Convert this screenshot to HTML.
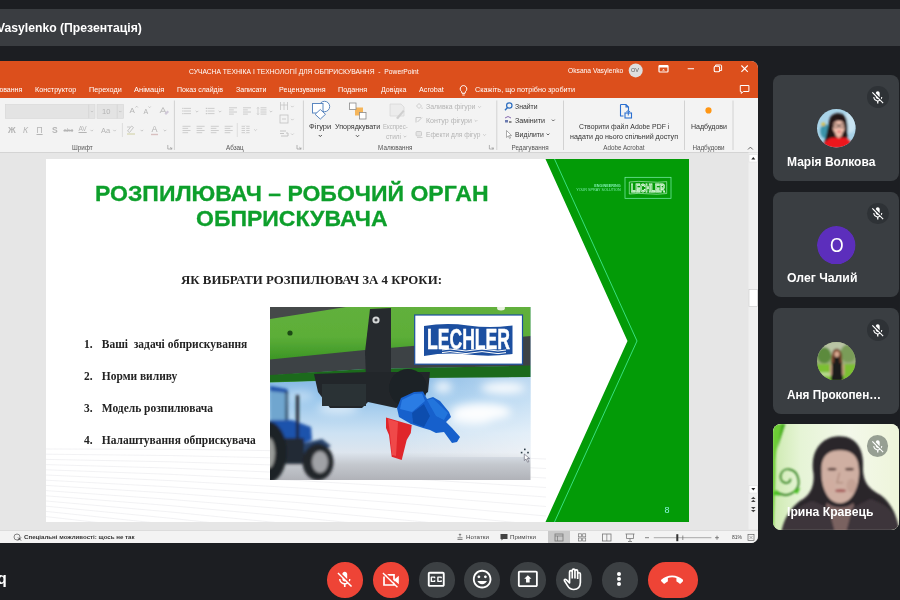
<!DOCTYPE html>
<html lang="uk">
<head>
<meta charset="utf-8">
<title>Meet</title>
<style>
*{box-sizing:border-box;margin:0;padding:0}
html,body{width:900px;height:600px;overflow:hidden;background:#1c1e22;font-family:"Liberation Sans",sans-serif}
.abs{position:absolute}
body>div{will-change:transform}
.t{position:absolute;white-space:pre;transform-origin:0 50%}
#hdr{left:0;top:9px;width:900px;height:37px;background:#3a3d41}
#ppt{left:0;top:61px;width:758px;height:482px;background:#e6e6e6;border-radius:0 7px 7px 0;overflow:hidden}
#orange{left:0;top:0;width:758px;height:37px;background:#dc4f1c}
#ribbon{left:0;top:37px;width:758px;height:54.500px;background:#f3f3f3;border-bottom:1px solid #d4d4d4}
#slide{left:46px;top:98px;width:643px;height:363px;background:#fff;overflow:hidden}
#status{left:0;top:469px;width:758px;height:13px;background:#f3f3f3;border-top:1px solid #dcdcdc}
.tile{position:absolute;border-radius:8px;overflow:hidden}
.mic{position:absolute;width:22px;height:22px;border-radius:50%}
.av{position:absolute;left:45px;top:34px;width:38px;height:38px;border-radius:50%;overflow:hidden}
.btn{position:absolute;background:#3c4043}
.btn.red{background:#ee4436}
.t1{-webkit-text-stroke:.3px #0d9f2b;color:#0d9f2b;font-weight:bold;font-size:22px;white-space:nowrap;line-height:26px;transform:scaleX(1.046);transform-origin:0 0}
#t1a{left:49px;top:22px}
#t1b{left:150px;top:47px}
#h2{left:135px;top:113px;font-family:"Liberation Serif",serif;font-weight:bold;font-size:12.300px;color:#222;white-space:nowrap;line-height:16px;transform:scaleX(1.045);transform-origin:0 0}
.li{left:38px;font-family:"Liberation Serif",serif;font-weight:bold;font-size:12.500px;color:#222;white-space:nowrap;line-height:16px;transform:scaleX(0.917);transform-origin:0 0}
.li b{position:absolute;left:0;top:0}
.li span{position:absolute;left:19.400px;top:0}
#pgn{left:618.500px;top:346px;font-size:9px;line-height:10px;color:#8af8e0;}
</style>
</head>
<body>
<div id="hdr" class="abs"><div class="t" style="left:-3.0px;top:9.5px;font-size:13.5px;line-height:18px;color:#fff;font-weight:bold;transform:scaleX(0.903);">Vasylenko (Презентація)</div>
</div>

<div id="ppt" class="abs">
  <div id="orange" class="abs"></div>
  <div id="ribbon" class="abs"></div>
  <div id="slide" class="abs">
    <svg class="abs" style="left:0;top:0" width="643" height="363" viewBox="0 0 643 363">
      <path d="M0,290.0 Q250,289.0 500,300.0" fill="none" stroke="#ececef" stroke-width=".7"/>
<path d="M0,295.2 Q250,296.4 500,309.5" fill="none" stroke="#ececef" stroke-width=".7"/>
<path d="M0,300.4 Q250,303.7 500,319.0" fill="none" stroke="#ececef" stroke-width=".7"/>
<path d="M0,305.6 Q250,311.1 500,328.5" fill="none" stroke="#ececef" stroke-width=".7"/>
<path d="M0,310.8 Q250,318.4 500,338.0" fill="none" stroke="#ececef" stroke-width=".7"/>
<path d="M0,316.0 Q250,325.8 500,347.5" fill="none" stroke="#ececef" stroke-width=".7"/>
<path d="M0,321.2 Q250,333.1 500,357.0" fill="none" stroke="#ececef" stroke-width=".7"/>
<path d="M0,326.4 Q250,340.4 500,366.5" fill="none" stroke="#ececef" stroke-width=".7"/>
<path d="M0,331.6 Q250,347.8 500,376.0" fill="none" stroke="#ececef" stroke-width=".7"/>
<path d="M0,336.8 Q250,355.1 500,385.5" fill="none" stroke="#ececef" stroke-width=".7"/>
<path d="M0,342.0 Q250,362.5 500,395.0" fill="none" stroke="#ececef" stroke-width=".7"/>
<path d="M0,347.2 Q250,369.9 500,404.5" fill="none" stroke="#ececef" stroke-width=".7"/>
<path d="M0,352.4 Q250,377.2 500,414.0" fill="none" stroke="#ececef" stroke-width=".7"/>
<path d="M0,357.6 Q250,384.6 500,423.5" fill="none" stroke="#ececef" stroke-width=".7"/>
<polygon points="499.500,0 643,0 643,363 499.500,363 581.500,182" fill="#039b07"/>
      <polyline points="508.500,0 591,182 508.500,363" fill="none" stroke="#3ee68c" stroke-width="0.9"/>
<g>
<rect x="579" y="18.300" width="46" height="21" fill="none" stroke="#7ff0b4" stroke-width=".7"/>
<path d="M583.300,23 Q592,21.800 602,22.800 T620.700,22.600 V34.500 Q611,35.800 602,34.800 T583.300,35 Z" fill="none" stroke="#c8f8d8" stroke-width=".6"/>
<text x="585" y="32.600" font-family="Liberation Sans, sans-serif" font-weight="bold" font-size="11" fill="#0a9a14" stroke="#eaffea" stroke-width=".9" textLength="34" lengthAdjust="spacingAndGlyphs">LECHLER</text>
<text x="574.700" y="27.500" text-anchor="end" font-family="Liberation Sans, sans-serif" font-weight="bold" font-size="3.300" fill="#7ff0b4" textLength="26.500" lengthAdjust="spacingAndGlyphs">ENGINEERING</text>
<text x="574.700" y="32.300" text-anchor="end" font-family="Liberation Sans, sans-serif" font-size="3.300" fill="#7ff0b4" textLength="44.500" lengthAdjust="spacingAndGlyphs">YOUR SPRAY SOLUTION</text>
</g>

    </svg>
    <div class="abs t1" id="t1a">РОЗПИЛЮВАЧ – РОБОЧИЙ ОРГАН</div>
    <div class="abs t1" id="t1b">ОБПРИСКУВАЧА</div>
    <div class="abs" id="h2">ЯК ВИБРАТИ РОЗПИЛЮВАЧ ЗА 4 КРОКИ:</div>
    <div class="abs li" style="top:177px"><b>1.</b><span>Ваші&nbsp; задачі обприскування</span></div>
    <div class="abs li" style="top:209.400px"><b>2.</b><span>Норми виливу</span></div>
    <div class="abs li" style="top:240.600px"><b>3.</b><span>Модель розпилювача</span></div>
    <div class="abs li" style="top:272.800px"><b>4.</b><span>Налаштування обприскувача</span></div>
    <svg class="abs" id="photo" style="left:224px;top:147.5px" width="260.5" height="173" viewBox="270 307 260.5 173" preserveAspectRatio="none">
      <defs>
        <linearGradient id="sky" x1="0" y1="0" x2="0" y2="1"><stop offset="0.4" stop-color="#84b7e4"/><stop offset=".54" stop-color="#9ac7ec"/><stop offset=".73" stop-color="#cde2f3"/><stop offset=".84" stop-color="#dde5ee"/><stop offset=".91" stop-color="#c4c8ce"/><stop offset="1" stop-color="#b0b2b8"/></linearGradient>
        <linearGradient id="hz" x1="0" y1="0" x2="1" y2="0"><stop offset="0" stop-color="#fff" stop-opacity="0"/><stop offset="1" stop-color="#fff" stop-opacity=".45"/></linearGradient>
        <linearGradient id="gbar" x1="0" y1="0" x2="0" y2="1"><stop offset="0" stop-color="#62b03c"/><stop offset=".55" stop-color="#5cae38"/><stop offset="1" stop-color="#3a9424"/></linearGradient>
        <filter id="bl" x="-5%" y="-5%" width="110%" height="110%"><feGaussianBlur stdDeviation="0.7"/></filter>
        <filter id="bl2" x="-20%" y="-20%" width="140%" height="140%"><feGaussianBlur stdDeviation="4"/></filter>
        <filter id="bl3" x="-20%" y="-20%" width="140%" height="140%"><feGaussianBlur stdDeviation="1.4"/></filter>
        <clipPath id="pc"><rect x="270" y="307" width="260.5" height="173"/></clipPath>
      </defs>
      <g clip-path="url(#pc)">
      <rect x="270" y="307" width="261" height="173" fill="url(#sky)"/>
      <rect x="400" y="377" width="131" height="80" fill="url(#hz)"/>
      <g filter="url(#bl2)" fill="#fff">
        <ellipse cx="481" cy="412" rx="30" ry="9" opacity=".95"/>
        <ellipse cx="470" cy="420" rx="22" ry="6" opacity=".7"/>
        <ellipse cx="503" cy="388" rx="22" ry="6" opacity=".9"/>
        <ellipse cx="443" cy="387" rx="9" ry="6" opacity=".8"/>
        <ellipse cx="338" cy="408" rx="20" ry="6" opacity=".55"/>
        <ellipse cx="300" cy="396" rx="14" ry="5" opacity=".4"/>
      </g>
      <!-- tractor -->
      <g filter="url(#bl3)">
        <polygon points="270,390 286,392 289,422 270,424" fill="#6fa6cf"/>
        <polygon points="270,386 287,389 288,393 270,391" fill="#1a50a8"/>
        <rect x="285.500" y="391" width="2" height="32" fill="#1c2a3c"/>
        <polygon points="270,420 292,420 311,427 312,440 296,446 270,446" fill="#1b52ac"/>
        <rect x="296" y="395" width="3" height="54" fill="#1a222c"/>
        <polygon points="300,444 322,439 331,446 318,452 300,462" fill="#26426c"/>
        <rect x="282" y="438" width="22" height="26" fill="#222a34"/>
        <ellipse cx="267" cy="452" rx="20" ry="31" fill="#1e2226"/>
        <ellipse cx="269" cy="453" rx="6" ry="15" fill="#9a9c9a"/>
        <ellipse cx="318" cy="462" rx="15.500" ry="18.500" fill="#22262c"/>
        <ellipse cx="320" cy="462" rx="8" ry="11" fill="#a0a2a6"/>
      </g>
      <!-- green boom -->
      <g filter="url(#bl)">
        <polygon points="270,307 531,307 531,337 365,351 270,361" fill="url(#gbar)"/>
        <polygon points="270,307 346,307 270,319" fill="#44484a"/>
        <polygon points="270,375.500 316,372.500 316,381 270,382.500" fill="#3a9a2a"/>
        <polygon points="270,359.500 365,350 531,336 531,366 365,369 270,375.500" fill="#3e4245"/>
        <polygon points="270,375 365,369 531,365.500 531,377 420,378 270,382" fill="#1d6a1c"/>
        <circle cx="290" cy="333" r="2.6" fill="#1e4a14"/>
        <ellipse cx="501" cy="308" rx="4" ry="2.5" fill="#e8f0e0"/>
        <!-- bracket -->
        <polygon points="370,309 391,308 391,378 366,378 365,352" fill="#262a2e"/>
        <polygon points="367,377 392,377 391,383 368,383" fill="#9a9ea2"/>
        <circle cx="376" cy="320" r="3.6" fill="#d6d8d8"/>
        <circle cx="376" cy="320" r="1.6" fill="#3a3e42"/>
        <!-- nozzle body -->
        <polygon points="314,374 368,372 430,372 428,392 410,404 396,408 368,402 362,408 330,408 318,392" fill="#22262a"/>
        <circle cx="408" cy="388" r="19" fill="#1e2226"/>
        <rect x="322" y="384" width="44" height="22" fill="#2c3034"/>
        <!-- blue nozzle -->
        <polygon points="401,398 414,392 423,391.500 427,399 433,397 440,401 449,412 451,417 446,422 452,428 460,437 457,442 452,443 444,432 436,433 430,430 423,428 411,424 399,417 397,408" fill="#1660cc"/>
        <polygon points="402,400 414,394 422,393.500 425,401 412,412 400,409" fill="#2c7ce4"/>
        <polygon points="427,400 433,398.500 448,413 444,420 436,416" fill="#2474dc"/>
        <polygon points="412,413 424,404 430,416 424,427 413,423" fill="#0f4eae"/>
        <!-- red nozzle -->
        <polygon points="386,417.500 411.700,425 410.800,433 406.700,440 401.700,460 391.700,456.700 389,435 386,428" fill="#e0262c"/>
        <polygon points="388,419 398,422 396,456 392,455 390,434" fill="#f0484a"/>
      </g>
      <!-- LECHLER logo -->
      <rect x="414.700" y="315" width="107.800" height="49.200" fill="#fff" stroke="#1b4f9e" stroke-width="1.200"/>
      <path d="M424,326 Q446,322.500 468,325.500 T512.500,325.500 L512.500,354 Q490,357 468,354.500 T424,356 Z" fill="#1c4fa0"/>
      <text x="427" y="348.500" font-family="Liberation Sans, sans-serif" font-weight="bold" font-size="29" fill="#fff" textLength="83" lengthAdjust="spacingAndGlyphs" stroke="#fff" stroke-width=".5">LECHLER</text>
      <path d="M442,350 q8,-2 16,0 t16,0 t16,0 t16,0" fill="none" stroke="#fff" stroke-width="1"/>
      <path d="M442,352.600 q8,-2 16,0 t16,0 t16,0 t16,0" fill="none" stroke="#fff" stroke-width="1"/>
      </g>
    </svg>
    <svg class="abs" style="left:471px;top:286px" width="16" height="20" viewBox="517 445 16 20">
      <g fill="#2a3a44"><rect x="524" y="448.600" width="1.600" height="1.600"/><rect x="520.800" y="451.800" width="1.600" height="1.600"/><rect x="527.200" y="451.800" width="1.600" height="1.600"/></g>
      <path d="M524.300,454 v6.500 l1.700,-1.500 l1.600,3.200 l1.200,-.6 l-1.600,-3.100 h2.300z" fill="#fff" stroke="#556" stroke-width=".6"/>
    </svg>
    <div class="abs" id="pgn">8</div>
  </div>

  <div id="status" class="abs"></div>
<svg class="abs" style="left:0;top:0" width="758" height="482" viewBox="0 61 758 482">
<circle cx="635.700" cy="70.400" r="7" fill="#dedede"/>
<rect x="659" y="65.500" width="9" height="6.500" rx=".8" fill="none" stroke="#fff" stroke-width="1.200"/><rect x="659" y="65.500" width="9" height="2" fill="#fff"/><path d="M662,70.500 l1.500,-1.500 l1.500,1.500z" fill="#fff"/>
<line x1="687.700" y1="68.700" x2="694" y2="68.700" stroke="#fff" stroke-width="1.100"/>
<rect x="714.200" y="66.300" width="5.400" height="5.400" rx="1.300" fill="none" stroke="#fff" stroke-width="1.100"/><path d="M715.600,66 v-1 h5 a1,1 0 0 1 1,1 v4.500 h-1.500" fill="none" stroke="#fff" stroke-width="1"/>
<path d="M741.400,65.500 l6.400,6.400 M747.800,65.500 l-6.400,6.400" stroke="#fff" stroke-width="1.100" fill="none"/>
<path d="M740.300,85.500 h8.600 v6 h-5.600 l-2,2 v-2 h-1z" fill="none" stroke="#fff" stroke-width="1"/>
<path d="M461.500,91.500 a3.300,3.300 0 1 1 4,0 l-.5,1.800 h-3z" fill="none" stroke="#fff" stroke-width="1"/><line x1="462.300" y1="95" x2="464.700" y2="95" stroke="#fff" stroke-width=".9"/>
<line x1="174.4" y1="100.500" x2="174.4" y2="150" stroke="#d2d2d2" stroke-width="1"/>
<line x1="303.4" y1="100.500" x2="303.4" y2="150" stroke="#d2d2d2" stroke-width="1"/>
<line x1="496.8" y1="100.500" x2="496.8" y2="150" stroke="#d2d2d2" stroke-width="1"/>
<line x1="563.5" y1="100.500" x2="563.5" y2="150" stroke="#d2d2d2" stroke-width="1"/>
<line x1="684.5" y1="100.500" x2="684.5" y2="150" stroke="#d2d2d2" stroke-width="1"/>
<line x1="733" y1="100.500" x2="733" y2="150" stroke="#d2d2d2" stroke-width="1"/>
<rect x="5.300" y="104.500" width="89.700" height="13.800" fill="#e3e3e3" stroke="#d6d6d6" stroke-width=".6"/>
<line x1="88.700" y1="104.500" x2="88.700" y2="118.300" stroke="#d0d0d0" stroke-width=".6"/>
<rect x="97" y="104.500" width="26.500" height="13.800" fill="#e3e3e3" stroke="#d6d6d6" stroke-width=".6"/>
<line x1="117.200" y1="104.500" x2="117.200" y2="118.300" stroke="#d0d0d0" stroke-width=".6"/>
<path d="M90.8,110.9 L92,112.1 L93.2,110.9" fill="none" stroke="#c4c4c4" stroke-width="0.9"/>
<path d="M119.1,110.9 L120.3,112.1 L121.5,110.9" fill="none" stroke="#c4c4c4" stroke-width="0.9"/>
<path d="M135.500,107.500 l1.200,-1.300 l1.200,1.300" fill="none" stroke="#bdbdbd" stroke-width=".8"/>
<path d="M148.500,106.500 l1.100,1.200 l1.100,-1.200" fill="none" stroke="#bdbdbd" stroke-width=".8"/>
<path d="M160,113 l3,-5.500 l3,5.500 M161,111.300 h4" fill="none" stroke="#c0c0c0" stroke-width="1"/><path d="M164.500,113.500 l3,-3 l1.500,1.500 l-3,3z" fill="#d0c8d8"/>
<path d="M90.5,129.85 L91.8,131.15 L93.1,129.85" fill="none" stroke="#c4c4c4" stroke-width="0.9"/>
<path d="M113.3,129.85 L114.6,131.15 L115.89999999999999,129.85" fill="none" stroke="#c4c4c4" stroke-width="0.9"/>
<path d="M140.6,129.85 L141.9,131.15 L143.20000000000002,129.85" fill="none" stroke="#c4c4c4" stroke-width="0.9"/>
<path d="M163.7,129.85 L165,131.15 L166.3,129.85" fill="none" stroke="#c4c4c4" stroke-width="0.9"/>
<line x1="122.400" y1="123" x2="122.400" y2="137" stroke="#d6d6d6" stroke-width=".8"/>
<path d="M127.500,131 l4,-5 l2,1.500 l-4,5z" fill="none" stroke="#c0c0c0" stroke-width=".9"/><path d="M127,127 h3" stroke="#c0c0c0" stroke-width=".8"/><line x1="127" y1="134" x2="135" y2="134" stroke="#d8d8b8" stroke-width="1.400"/>
<line x1="151" y1="134.500" x2="158" y2="134.500" stroke="#d8c0c0" stroke-width="1.400"/>
<path d="M168,145.2 h-0.010 M167.8,145 v4 h4.400" fill="none" stroke="#9a9a9a" stroke-width=".7"/><path d="M170,147 l1.800,1.800 M171.8,147.4 v1.400 h-1.400" fill="none" stroke="#9a9a9a" stroke-width=".6"/>
<path d="M297.2,145.2 h-0.010 M297.0,145 v4 h4.400" fill="none" stroke="#9a9a9a" stroke-width=".7"/><path d="M299.2,147 l1.800,1.800 M301.0,147.4 v1.400 h-1.400" fill="none" stroke="#9a9a9a" stroke-width=".6"/>
<path d="M489.6,145.2 h-0.010 M489.40000000000003,145 v4 h4.400" fill="none" stroke="#9a9a9a" stroke-width=".7"/><path d="M491.6,147 l1.800,1.800 M493.40000000000003,147.4 v1.400 h-1.400" fill="none" stroke="#9a9a9a" stroke-width=".6"/>
<line x1="184.0" y1="108.4" x2="191.0" y2="108.4" stroke="#c8c8c8" stroke-width="0.9"/>
<line x1="184.0" y1="111.0" x2="191.0" y2="111.0" stroke="#c8c8c8" stroke-width="0.9"/>
<line x1="184.0" y1="113.6" x2="191.0" y2="113.6" stroke="#c8c8c8" stroke-width="0.9"/>
<rect x="182.3" y="107.8" width="1.200" height="1.200" fill="#c8c8c8"/>
<rect x="182.3" y="110.4" width="1.200" height="1.200" fill="#c8c8c8"/>
<rect x="182.3" y="113.0" width="1.200" height="1.200" fill="#c8c8c8"/>
<line x1="207.5" y1="108.4" x2="214.5" y2="108.4" stroke="#c8c8c8" stroke-width="0.9"/>
<line x1="207.5" y1="111.0" x2="214.5" y2="111.0" stroke="#c8c8c8" stroke-width="0.9"/>
<line x1="207.5" y1="113.6" x2="214.5" y2="113.6" stroke="#c8c8c8" stroke-width="0.9"/>
<rect x="205.8" y="107.8" width="1.200" height="1.200" fill="#c8c8c8"/>
<rect x="205.8" y="110.4" width="1.200" height="1.200" fill="#c8c8c8"/>
<rect x="205.8" y="113.0" width="1.200" height="1.200" fill="#c8c8c8"/>
<path d="M195.7,110.85 L197,112.15 L198.3,110.85" fill="none" stroke="#c8c8c8" stroke-width="0.9"/>
<path d="M218.7,110.85 L220,112.15 L221.3,110.85" fill="none" stroke="#c8c8c8" stroke-width="0.9"/>
<path d="M269.7,110.85 L271,112.15 L272.3,110.85" fill="none" stroke="#c8c8c8" stroke-width="0.9"/>
<line x1="229.0" y1="107.8" x2="237.0" y2="107.8" stroke="#c8c8c8" stroke-width="0.9"/>
<line x1="229.0" y1="109.9" x2="233.8" y2="109.9" stroke="#c8c8c8" stroke-width="0.9"/>
<line x1="229.0" y1="112.0" x2="237.0" y2="112.0" stroke="#c8c8c8" stroke-width="0.9"/>
<line x1="229.0" y1="114.1" x2="233.8" y2="114.1" stroke="#c8c8c8" stroke-width="0.9"/>
<line x1="243.0" y1="107.8" x2="251.0" y2="107.8" stroke="#c8c8c8" stroke-width="0.9"/>
<line x1="243.0" y1="109.9" x2="247.8" y2="109.9" stroke="#c8c8c8" stroke-width="0.9"/>
<line x1="243.0" y1="112.0" x2="251.0" y2="112.0" stroke="#c8c8c8" stroke-width="0.9"/>
<line x1="243.0" y1="114.1" x2="247.8" y2="114.1" stroke="#c8c8c8" stroke-width="0.9"/>
<line x1="260.5" y1="107.8" x2="266.5" y2="107.8" stroke="#c8c8c8" stroke-width="0.9"/>
<line x1="260.5" y1="109.9" x2="266.5" y2="109.9" stroke="#c8c8c8" stroke-width="0.9"/>
<line x1="260.5" y1="112.0" x2="266.5" y2="112.0" stroke="#c8c8c8" stroke-width="0.9"/>
<line x1="260.5" y1="114.1" x2="266.5" y2="114.1" stroke="#c8c8c8" stroke-width="0.9"/>
<path d="M258,107.500 v7 M257,108.500 l1,-1.200 l1,1.200 M257,113.500 l1,1.200 l1,-1.200" fill="none" stroke="#c4c4c4" stroke-width=".7"/>
<path d="M291.09999999999997,105.85 L292.4,107.15 L293.7,105.85" fill="none" stroke="#c8c8c8" stroke-width="0.9"/>
<path d="M291.09999999999997,118.85 L292.4,120.15 L293.7,118.85" fill="none" stroke="#c8c8c8" stroke-width="0.9"/>
<path d="M291.09999999999997,133.54999999999998 L292.4,134.85 L293.7,133.54999999999998" fill="none" stroke="#c8c8c8" stroke-width="0.9"/>
<path d="M280.500,102 v8 M284,102 v8 M287.500,102 v8 M280.500,105 h7" fill="none" stroke="#c4c4c4" stroke-width=".8"/>
<rect x="280" y="115" width="8" height="8" fill="none" stroke="#c0c0c0" stroke-width=".8"/><path d="M282,119 h4" stroke="#c0c0c0" stroke-width=".8"/>
<path d="M280,131 h6 M280,133.500 h4 M281,136 h7 v-3 h-2" fill="none" stroke="#c0c0c0" stroke-width=".9"/>
<line x1="182.5" y1="126.3" x2="190.5" y2="126.3" stroke="#c8c8c8" stroke-width="0.9"/>
<line x1="182.5" y1="128.4" x2="188.1" y2="128.4" stroke="#c8c8c8" stroke-width="0.9"/>
<line x1="182.5" y1="130.5" x2="190.5" y2="130.5" stroke="#c8c8c8" stroke-width="0.9"/>
<line x1="182.5" y1="132.7" x2="188.1" y2="132.7" stroke="#c8c8c8" stroke-width="0.9"/>
<line x1="196.6" y1="126.3" x2="204.6" y2="126.3" stroke="#c8c8c8" stroke-width="0.9"/>
<line x1="196.6" y1="128.4" x2="202.2" y2="128.4" stroke="#c8c8c8" stroke-width="0.9"/>
<line x1="196.6" y1="130.5" x2="204.6" y2="130.5" stroke="#c8c8c8" stroke-width="0.9"/>
<line x1="196.6" y1="132.7" x2="202.2" y2="132.7" stroke="#c8c8c8" stroke-width="0.9"/>
<line x1="210.8" y1="126.3" x2="218.8" y2="126.3" stroke="#c8c8c8" stroke-width="0.9"/>
<line x1="210.8" y1="128.4" x2="216.4" y2="128.4" stroke="#c8c8c8" stroke-width="0.9"/>
<line x1="210.8" y1="130.5" x2="218.8" y2="130.5" stroke="#c8c8c8" stroke-width="0.9"/>
<line x1="210.8" y1="132.7" x2="216.4" y2="132.7" stroke="#c8c8c8" stroke-width="0.9"/>
<line x1="224.7" y1="126.3" x2="232.7" y2="126.3" stroke="#c8c8c8" stroke-width="0.9"/>
<line x1="224.7" y1="128.4" x2="230.29999999999998" y2="128.4" stroke="#c8c8c8" stroke-width="0.9"/>
<line x1="224.7" y1="130.5" x2="232.7" y2="130.5" stroke="#c8c8c8" stroke-width="0.9"/>
<line x1="224.7" y1="132.7" x2="230.29999999999998" y2="132.7" stroke="#c8c8c8" stroke-width="0.9"/>
<line x1="237.300" y1="123" x2="237.300" y2="137" stroke="#d8d8d8" stroke-width=".8"/>
<line x1="241.6" y1="126.3" x2="249.6" y2="126.3" stroke="#c8c8c8" stroke-width="0.9"/>
<line x1="241.6" y1="128.4" x2="249.6" y2="128.4" stroke="#c8c8c8" stroke-width="0.9"/>
<line x1="241.6" y1="130.5" x2="249.6" y2="130.5" stroke="#c8c8c8" stroke-width="0.9"/>
<line x1="241.6" y1="132.7" x2="249.6" y2="132.7" stroke="#c8c8c8" stroke-width="0.9"/>
<line x1="245.600" y1="126" x2="245.600" y2="133" stroke="#f3f3f3" stroke-width="1.200"/>
<path d="M254.2,129.35 L255.5,130.65 L256.8,129.35" fill="none" stroke="#c8c8c8" stroke-width="0.9"/>
<g fill="#fff" stroke="#5b87c0" stroke-width="1"><circle cx="324.500" cy="106.500" r="5.200"/><rect x="312.500" y="103.500" width="10.500" height="9.500"/><path d="M320.300,109.500 l5.200,4.800 l-5.200,4.800 l-5.200,-4.800z"/></g>
<path d="M318.8,135.05 L320.3,136.55 L321.8,135.05" fill="none" stroke="#444" stroke-width="1"/>
<rect x="355" y="107.500" width="8" height="8" fill="#f5b55a"/><rect x="349.500" y="103" width="6.500" height="6.500" fill="#fff" stroke="#8a8a8a" stroke-width=".8"/><rect x="359.500" y="112.500" width="6.500" height="6.500" fill="#fff" stroke="#8a8a8a" stroke-width=".8"/>
<path d="M356.0,135.25 L357.5,136.75 L359.0,135.25" fill="none" stroke="#444" stroke-width="1"/>
<path d="M390,104 h11 l3,3 v9 h-14z" fill="#ececec" stroke="#d8d8d8" stroke-width=".8"/><path d="M396,118 l7,-8 l1.500,1.300 l-6.500,8z" fill="#cfcfcf"/>
<path d="M403.7,135.85 L405,137.15 L406.3,135.85" fill="none" stroke="#c4c4c4" stroke-width="0.9"/>
<path d="M416.500,106 l2.500,-2.500 l2.500,2.500 l-2.500,2.500z M422,107.500 v1.500" fill="none" stroke="#c8c8c8" stroke-width=".9"/>
<path d="M416,122.500 v-5 h5 M417.500,122 l4.500,-4.500" fill="none" stroke="#c4c4c4" stroke-width=".9"/>
<rect x="416" y="131.500" width="5.500" height="4.500" rx="1" fill="#e4e4e4" stroke="#c4c4c4" stroke-width=".8"/><path d="M417,137.500 h5.500" stroke="#cfcfcf" stroke-width=".9"/>
<path d="M478.2,106.35 L479.5,107.65 L480.8,106.35" fill="none" stroke="#c4c4c4" stroke-width="0.9"/>
<path d="M474.7,120.14999999999999 L476,121.45 L477.3,120.14999999999999" fill="none" stroke="#c4c4c4" stroke-width="0.9"/>
<path d="M483.2,134.35 L484.5,135.65 L485.8,134.35" fill="none" stroke="#c4c4c4" stroke-width="0.9"/>
<circle cx="509.300" cy="105.500" r="2.700" fill="none" stroke="#2f6fc0" stroke-width="1.200"/><line x1="507.300" y1="107.700" x2="505" y2="110.300" stroke="#2f6fc0" stroke-width="1.300"/>
<path d="M505,118 q3,-3 6,0" fill="none" stroke="#7a5aa8" stroke-width=".9"/><rect x="505" y="120" width="3" height="2.500" fill="#6a7ab0"/><rect x="509" y="121" width="2.500" height="2" fill="#8a8a8a"/>
<path d="M506.500,130.500 v7 l1.800,-1.600 l1.300,2.600 l1,-.5 l-1.300,-2.500 h2.300z" fill="#fff" stroke="#8a8a8a" stroke-width=".7"/>
<path d="M551.9,119.6 L553.3,121.0 L554.6999999999999,119.6" fill="none" stroke="#555" stroke-width="0.9"/>
<path d="M546.6,133.60000000000002 L548,135.0 L549.4,133.60000000000002" fill="none" stroke="#555" stroke-width="0.9"/>
<path d="M620.500,104.500 h5.500 l2.500,2.500 v3 M626,104.500 v2.500 h2.500 M623.500,116 h-3 v-11.500" fill="none" stroke="#2a6fd0" stroke-width="1.100"/><rect x="625" y="113" width="6.500" height="5" fill="none" stroke="#2a6fd0" stroke-width="1.100"/><path d="M628.300,115.500 v-5 M626.500,112 l1.800,-1.800 l1.800,1.800" fill="none" stroke="#2a6fd0" stroke-width="1"/>
<circle cx="708.500" cy="110.400" r="3.100" fill="#ff9614"/>
<path d="M748,149.500 l2.400,-2.400 l2.400,2.400" fill="none" stroke="#555" stroke-width=".9"/>
<rect x="748.500" y="152.500" width="9.500" height="377" fill="#f0f0f0"/>
<rect x="749" y="154.500" width="8.500" height="7.500" fill="#fff" stroke="#dadada" stroke-width=".5"/><path d="M751.300,159.500 l2,-2.500 l2,2.500z" fill="#222"/>
<rect x="749" y="289.500" width="8.500" height="17" fill="#fff" stroke="#c8c8c8" stroke-width=".6"/>
<rect x="749" y="485.500" width="8.500" height="7.500" fill="#fff" stroke="#dadada" stroke-width=".5"/><path d="M751.300,488 l2,2.500 l2,-2.500z" fill="#222"/>
<path d="M751,499 l2.300,-2.300 l2.300,2.300z M751,502 l2.300,-2.300 l2.300,2.300z" fill="#444"/>
<path d="M751,507 l2.300,2.300 l2.300,-2.300z M751,510 l2.300,2.300 l2.300,-2.300z" fill="#444"/>
<circle cx="17" cy="537" r="3" fill="none" stroke="#555" stroke-width=".7"/><path d="M18,537.500 l3,3 M21,537.500 l-3,3" stroke="#333" stroke-width=".8"/>
<path d="M457.500,539.500 h5 M457.500,537.800 h5 M460,534 v2.500 M458.800,535 l1.200,-1.200 l1.200,1.200" fill="none" stroke="#555" stroke-width=".7"/>
<path d="M500.500,534 h7 v5 h-4.500 l-1.500,1.500 v-1.500 h-1z" fill="#444"/>
<rect x="548" y="531" width="22" height="12" fill="#c9c9c9"/>
<rect x="555" y="534" width="8" height="7" fill="none" stroke="#777" stroke-width=".8"/><path d="M555,536 h8 M557.500,536 v5" stroke="#777" stroke-width=".7"/>
<rect x="578.5" y="533.8" width="3" height="3" fill="none" stroke="#777" stroke-width=".7"/>
<rect x="578.5" y="538.0" width="3" height="3" fill="none" stroke="#777" stroke-width=".7"/>
<rect x="582.7" y="533.8" width="3" height="3" fill="none" stroke="#777" stroke-width=".7"/>
<rect x="582.7" y="538.0" width="3" height="3" fill="none" stroke="#777" stroke-width=".7"/>
<rect x="602.500" y="534" width="8.500" height="7" fill="none" stroke="#777" stroke-width=".8"/><path d="M606.800,534 v7" stroke="#777" stroke-width=".7"/>
<path d="M625.500,534 h9 M626.500,534 v4.500 h7 v-4.500 M630,538.500 v2.500 M628,541.500 h4" fill="none" stroke="#777" stroke-width=".8"/>
<path d="M645,537.700 h4" stroke="#666" stroke-width=".8"/><line x1="653.800" y1="537.700" x2="711.400" y2="537.700" stroke="#888" stroke-width=".7"/><rect x="676.300" y="534.200" width="2" height="7" fill="#333"/><line x1="682.800" y1="535.500" x2="682.800" y2="540" stroke="#666" stroke-width=".7"/><path d="M715,537.700 h4 M717,535.700 v4" stroke="#666" stroke-width=".8"/>
<rect x="748" y="534.500" width="6" height="6" fill="none" stroke="#666" stroke-width=".7"/><path d="M749.500,536 l3,3 M752.500,536 l-3,3" stroke="#666" stroke-width=".5"/>
</svg>

<div class="t" style="left:188.6px;top:4.5px;font-size:7.2px;line-height:11px;color:#fff;transform:scaleX(0.936);">СУЧАСНА ТЕХНІКА І ТЕХНОЛОГІЇ ДЛЯ ОБПРИСКУВАННЯ  -  PowerPoint</div>
<div class="t" style="left:568.0px;top:4.0px;font-size:7.2px;line-height:11px;color:#fff;transform:scaleX(0.931);">Oksana Vasylenko</div>
<div class="t" style="left:-16.5px;top:23.0px;font-size:7.8px;line-height:11px;color:#fff;transform:scaleX(0.898);">Малювання</div>
<div class="t" style="left:34.8px;top:23.0px;font-size:7.8px;line-height:11px;color:#fff;transform:scaleX(0.926);">Конструктор</div>
<div class="t" style="left:88.7px;top:23.0px;font-size:7.8px;line-height:11px;color:#fff;transform:scaleX(0.925);">Переходи</div>
<div class="t" style="left:134.0px;top:23.0px;font-size:7.8px;line-height:11px;color:#fff;transform:scaleX(0.963);">Анімація</div>
<div class="t" style="left:176.8px;top:23.0px;font-size:7.8px;line-height:11px;color:#fff;transform:scaleX(0.900);">Показ слайдів</div>
<div class="t" style="left:235.9px;top:23.0px;font-size:7.8px;line-height:11px;color:#fff;transform:scaleX(0.910);">Записати</div>
<div class="t" style="left:279.0px;top:23.0px;font-size:7.8px;line-height:11px;color:#fff;transform:scaleX(0.916);">Рецензування</div>
<div class="t" style="left:338.2px;top:23.0px;font-size:7.8px;line-height:11px;color:#fff;transform:scaleX(0.927);">Подання</div>
<div class="t" style="left:380.7px;top:23.0px;font-size:7.8px;line-height:11px;color:#fff;transform:scaleX(0.902);">Довідка</div>
<div class="t" style="left:419.2px;top:23.0px;font-size:7.8px;line-height:11px;color:#fff;transform:scaleX(0.923);">Acrobat</div>
<div class="t" style="left:475.0px;top:23.0px;font-size:7.8px;line-height:11px;color:#fff;transform:scaleX(0.929);">Скажіть, що потрібно зробити</div>
<div class="t" style="left:71.9px;top:82.3px;font-size:6.3px;line-height:10px;color:#555;">Шрифт</div>
<div class="t" style="left:226.0px;top:82.3px;font-size:6.3px;line-height:10px;color:#555;">Абзац</div>
<div class="t" style="left:378.1px;top:82.3px;font-size:6.3px;line-height:10px;color:#555;">Малювання</div>
<div class="t" style="left:511.5px;top:82.3px;font-size:6.3px;line-height:10px;color:#555;">Редагування</div>
<div class="t" style="left:603.3px;top:82.3px;font-size:6.3px;line-height:10px;color:#555;">Adobe Acrobat</div>
<div class="t" style="left:692.4px;top:82.3px;font-size:6.3px;line-height:10px;color:#555;">Надбудови</div>
<div class="t" style="left:102.0px;top:44.8px;font-size:7.5px;line-height:11px;color:#b4b4b4;">10</div>
<div class="t" style="left:309.3px;top:60.2px;font-size:7.6px;line-height:11px;color:#333;transform:scaleX(0.990);">Фігури</div>
<div class="t" style="left:334.7px;top:60.2px;font-size:7.6px;line-height:11px;color:#333;transform:scaleX(0.935);">Упорядкувати</div>
<div class="t" style="left:383.3px;top:60.2px;font-size:7.6px;line-height:11px;color:#b4b4b4;transform:scaleX(0.792);">Експрес-</div>
<div class="t" style="left:386.0px;top:69.7px;font-size:7.6px;line-height:11px;color:#b4b4b4;transform:scaleX(0.850);">стилі</div>
<div class="t" style="left:426.0px;top:40.2px;font-size:7.6px;line-height:11px;color:#b4b4b4;transform:scaleX(0.912);">Заливка фігури</div>
<div class="t" style="left:426.0px;top:53.9px;font-size:7.6px;line-height:11px;color:#b4b4b4;transform:scaleX(0.932);">Контур фігури</div>
<div class="t" style="left:426.0px;top:68.0px;font-size:7.6px;line-height:11px;color:#b4b4b4;transform:scaleX(0.871);">Ефекти для фігур</div>
<div class="t" style="left:515.0px;top:40.2px;font-size:7.6px;line-height:11px;color:#333;transform:scaleX(0.900);">Знайти</div>
<div class="t" style="left:515.0px;top:53.5px;font-size:7.6px;line-height:11px;color:#333;transform:scaleX(0.940);">Замінити</div>
<div class="t" style="left:515.0px;top:67.5px;font-size:7.6px;line-height:11px;color:#333;transform:scaleX(0.904);">Виділити</div>
<div class="t" style="left:578.7px;top:59.8px;font-size:7.6px;line-height:11px;color:#333;transform:scaleX(0.905);">Створити файл Adobe PDF і</div>
<div class="t" style="left:569.8px;top:69.7px;font-size:7.6px;line-height:11px;color:#333;transform:scaleX(0.935);">надати до нього спільний доступ</div>
<div class="t" style="left:691.0px;top:60.2px;font-size:7.6px;line-height:11px;color:#333;transform:scaleX(0.927);">Надбудови</div>
<div class="t" style="left:8.0px;top:63.0px;font-size:8.5px;line-height:12px;color:#b4b4b4;font-weight:bold;">Ж</div>
<div class="t" style="left:23.0px;top:63.0px;font-size:8.5px;line-height:12px;color:#b4b4b4;font-style:italic;">К</div>
<div class="t" style="left:36.5px;top:63.0px;font-size:8.5px;line-height:12px;color:#b4b4b4;text-decoration:underline;">П</div>
<div class="t" style="left:52.0px;top:63.0px;font-size:8.5px;line-height:12px;color:#b4b4b4;font-weight:bold;">S</div>
<div class="t" style="left:63.5px;top:64.5px;font-size:6px;line-height:9px;color:#b4b4b4;text-decoration:line-through;">abc</div>
<div class="t" style="left:78.5px;top:63.0px;font-size:6.5px;line-height:10px;color:#b4b4b4;text-decoration:underline;">AV</div>
<div class="t" style="left:101.0px;top:63.5px;font-size:7.5px;line-height:11px;color:#b4b4b4;">Aa</div>
<div class="t" style="left:151.5px;top:62.0px;font-size:9px;line-height:13px;color:#b4b4b4;">A</div>
<div class="t" style="left:129.5px;top:44.3px;font-size:8px;line-height:12px;color:#b4b4b4;">A</div>
<div class="t" style="left:143.5px;top:45.8px;font-size:7px;line-height:10px;color:#b4b4b4;">A</div>
<div class="t" style="left:631.0px;top:5.0px;font-size:5.5px;line-height:9px;color:#555;">OV</div>
<div class="t" style="left:24.4px;top:472.1px;font-size:5.6px;line-height:9px;color:#333;font-weight:bold;transform:scaleX(1.096);">Спеціальні можливості: щось не так</div>
<div class="t" style="left:466.0px;top:472.2px;font-size:5.6px;line-height:9px;color:#444;transform:scaleX(1.113);">Нотатки</div>
<div class="t" style="left:510.0px;top:472.2px;font-size:5.6px;line-height:9px;color:#444;transform:scaleX(1.106);">Примітки</div>
<div class="t" style="left:732.0px;top:472.2px;font-size:5.6px;line-height:9px;color:#444;transform:scaleX(0.892);">81%</div>

</div>

<div class="tile" style="left:772.5px;top:75px;width:126px;height:106px;background:#3a3e42"><div class="mic" style="left:94.3px;top:11.3px;width:21.400px;height:21.400px;background:#2e3236"></div><svg class="abs" style="left:97.25px;top:14.75px" width="15.5" height="15.5" viewBox="0 0 24 24"><path d="M19 11h-1.700c0 .74-.16 1.430-.43 2.050l1.230 1.230c.56-.98.9-2.090.9-3.280zm-4.020.17c0-.06.020-.11.020-.17V5c0-1.660-1.340-3-3-3S9 3.340 9 5v.18l5.980 5.990zM4.270 3L3 4.270l6.010 6.010V11c0 1.660 1.330 3 2.990 3 .22 0 .44-.03.65-.08l1.660 1.660c-.71.33-1.500.52-2.310.52-2.760 0-5.300-2.100-5.300-5.100H5c0 3.410 2.720 6.230 6 6.720V21h2v-3.280c.91-.13 1.770-.45 2.540-.9L19.730 21 21 19.730 4.270 3z" fill="#fff" /></svg><svg class="abs" style="left:44.2px;top:34.1px" width="38.600" height="38.600" viewBox="-19.300 -19.300 38.600 38.600"><defs><clipPath id="c534"><circle r="19.300"/></clipPath><filter id="ab" x="-20%" y="-20%" width="140%" height="140%"><feGaussianBlur stdDeviation=".8"/></filter></defs><g clip-path="url(#c534)"><rect x="-20" y="-20" width="40" height="40" fill="#a9d3e8"/><g filter="url(#ab)"><ellipse cx="-11" cy="3" rx="5" ry="7" fill="#3a94aa"/><ellipse cx="-13" cy="-4" rx="2" ry="2" fill="#d8c050"/><ellipse cx="14" cy="-6" rx="6" ry="11" fill="#c8e4f2"/>
<path d="M-13,17 C-9,6 -8,-4 -6.500,-10 C-4,-16 6,-17 9.500,-11 C12,-5 11,4 11,10 L10,17z" fill="#231214"/><ellipse cx="2.500" cy="-1.500" rx="6" ry="7.800" fill="#f2c0ae"/><path d="M-4.500,-3 Q-2,-10.500 5,-9.500 Q9,-8 9,-2 Q7,-8 2,-7.500 Q-2,-7 -4.500,-3z" fill="#231214"/>
<rect x="-2.700" y="-4" width="4.600" height="3.200" rx=".8" fill="none" stroke="#1a1a1a" stroke-width=".9"/><rect x="3.400" y="-4" width="4.600" height="3.200" rx=".8" fill="none" stroke="#1a1a1a" stroke-width=".9"/>
<path d="M-14,20 C-12,11 -5,8.500 2,9.500 C10,8.500 15,11 16.500,20z" fill="#ee141e"/><path d="M-1,7 l3.500,3 l3.500,-3 v-2 h-7z" fill="#f0baa8"/><ellipse cx="2.800" cy="3.300" rx="2" ry=".8" fill="#d83c50"/></g></g></svg><div class="t" style="left:14.1px;top:77.7px;font-size:13px;line-height:18px;color:#fff;font-weight:bold;transform:scaleX(0.925);">Марія Волкова</div>
</div>
<div class="tile" style="left:772.5px;top:192px;width:126px;height:105px;background:#3a3e42"><div class="mic" style="left:94.3px;top:10.8px;width:21.400px;height:21.400px;background:#2e3236"></div><svg class="abs" style="left:97.25px;top:14.25px" width="15.5" height="15.5" viewBox="0 0 24 24"><path d="M19 11h-1.700c0 .74-.16 1.430-.43 2.050l1.230 1.230c.56-.98.9-2.090.9-3.280zm-4.020.17c0-.06.020-.11.020-.17V5c0-1.660-1.340-3-3-3S9 3.340 9 5v.18l5.980 5.990zM4.270 3L3 4.270l6.010 6.010V11c0 1.660 1.330 3 2.990 3 .22 0 .44-.03.65-.08l1.660 1.660c-.71.33-1.500.52-2.310.52-2.760 0-5.300-2.100-5.300-5.100H5c0 3.410 2.720 6.230 6 6.720V21h2v-3.280c.91-.13 1.770-.45 2.540-.9L19.730 21 21 19.730 4.270 3z" fill="#fff" /></svg><svg class="abs" style="left:44.2px;top:33.7px" width="38.600" height="38.600" viewBox="-19.300 -19.300 38.600 38.600"><defs><clipPath id="c530"><circle r="19.300"/></clipPath><filter id="ab" x="-20%" y="-20%" width="140%" height="140%"><feGaussianBlur stdDeviation=".8"/></filter></defs><g clip-path="url(#c530)"><circle r="19.300" fill="#5c2ebc"/></g></svg><div class="t" style="left:56.9px;top:39.1px;font-size:21px;line-height:27px;color:#fff;transform:scaleX(0.833);">O</div>
<div class="t" style="left:14.1px;top:77.2px;font-size:13px;line-height:18px;color:#fff;font-weight:bold;transform:scaleX(0.940);">Олег Чалий</div>
</div>
<div class="tile" style="left:772.5px;top:308px;width:126px;height:106px;background:#3a3e42"><div class="mic" style="left:94.3px;top:11.3px;width:21.400px;height:21.400px;background:#2e3236"></div><svg class="abs" style="left:97.25px;top:14.75px" width="15.5" height="15.5" viewBox="0 0 24 24"><path d="M19 11h-1.700c0 .74-.16 1.430-.43 2.050l1.230 1.230c.56-.98.9-2.090.9-3.280zm-4.020.17c0-.06.020-.11.020-.17V5c0-1.660-1.340-3-3-3S9 3.340 9 5v.18l5.980 5.990zM4.270 3L3 4.270l6.010 6.010V11c0 1.660 1.330 3 2.990 3 .22 0 .44-.03.65-.08l1.660 1.660c-.71.33-1.500.52-2.310.52-2.760 0-5.300-2.100-5.300-5.100H5c0 3.410 2.720 6.230 6 6.720V21h2v-3.280c.91-.13 1.770-.45 2.540-.9L19.730 21 21 19.730 4.270 3z" fill="#fff" /></svg><svg class="abs" style="left:44.2px;top:33.7px" width="38.600" height="38.600" viewBox="-19.300 -19.300 38.600 38.600"><defs><clipPath id="c530"><circle r="19.300"/></clipPath><filter id="ab" x="-20%" y="-20%" width="140%" height="140%"><feGaussianBlur stdDeviation=".8"/></filter></defs><g clip-path="url(#c530)"><rect x="-20" y="-20" width="40" height="40" fill="#9aae7c"/><g filter="url(#ab)"><rect x="-20" y="-20" width="40" height="14" fill="#b9c4a4"/><ellipse cx="-12" cy="-6" rx="7" ry="8" fill="#5c8a3c"/><ellipse cx="12" cy="-8" rx="8" ry="9" fill="#7a9c58"/><rect x="-20" y="3" width="40" height="18" fill="#7cc030"/><rect x="-20" y="11" width="16" height="4" fill="#b8d890"/>
<path d="M-5.500,20 L-4.500,0 C-5,-10 -2,-12.500 0.500,-12.500 C3.500,-12.500 6,-9 5.500,0 L7,20z" fill="#1c1a1a"/><path d="M-4.500,2 C-5.500,-8 -3,-12.500 0.500,-12.500 C4,-12.500 6.500,-8 5.500,2 L3.500,2 L3,-6 L-2,-6 L-2.500,2z" fill="#7a452c"/><ellipse cx="0.500" cy="-7" rx="2.400" ry="3" fill="#d8a890"/><rect x="-6.500" y="3" width="2" height="11" fill="#d0a088"/><rect x="6" y="3" width="2" height="11" fill="#d0a088"/></g></g></svg><div class="t" style="left:14.1px;top:77.7px;font-size:13px;line-height:18px;color:#fff;font-weight:bold;transform:scaleX(0.905);">Аня Прокопен…</div>
</div>
<div class="tile" style="left:772.5px;top:424.3px;width:126px;height:105.99999999999994px;background:#e6f2d6"><svg class="abs" style="left:0;top:0" width="126" height="106" viewBox="772.500 424.300 126 106" preserveAspectRatio="none">
<defs><linearGradient id="vg" x1="0" y1="0" x2="1" y2="0"><stop offset="0" stop-color="#cdeab0"/><stop offset=".22" stop-color="#e6f4d6"/><stop offset=".6" stop-color="#f3f8ea"/><stop offset="1" stop-color="#eef5da"/></linearGradient>
<filter id="vb" x="-10%" y="-10%" width="120%" height="120%"><feGaussianBlur stdDeviation="1.300"/></filter></defs>
<rect x="772" y="424" width="128" height="108" fill="url(#vg)"/>
<g filter="url(#vb)">
<path d="M772,424 h11 C778,438 775,450 775,466 C775,480 774,500 773,531 h-2z" fill="#6ccc34"/>
<path d="M781,424 h4 L776.500,450z" fill="#46ac20"/>
<path d="M776,492 C786,500 800,492 798,480 C796,468 782,466 780,476 C779,484 790,486 790,479" fill="none" stroke="#2c7c1c" stroke-width="1.700"/>
<path d="M792,492 l8,-4 l-3,6z M776,490 l-4,5 l8,1z" fill="#48c020"/>
<path d="M813,474 C809,450 822,437 838,436.500 C855,436 864,448 862.500,470 C863,482 868,488 876,493 C888,499 896,512 899,531 L781,531 C785,514 794,504 803,499 C810,494 814,486 813,474z" fill="#2a252b"/>
<path d="M821,471 C820.500,455 829,450.500 839.500,450.500 C850,450.500 858.500,455 858.500,471 C859,487 852,503.500 839.500,503.500 C827,503.500 820.500,487 821,471z" fill="#cfafa2"/>
<ellipse cx="829" cy="486" rx="5" ry="7" fill="#d0aca0" opacity=".7"/><ellipse cx="851" cy="486" rx="5" ry="7" fill="#bf9c90" opacity=".7"/>
<path d="M826,503 C834,509 846,509 853,503 L856,531 L823,531z" fill="#7a6260"/>
<path d="M781,531 C787,514 798,506 812,501 L828,508 L834,531z M899,531 C896,514 888,505 870,499 L852,508 L846,531z" fill="#3c363b"/>
<ellipse cx="831.500" cy="469.500" rx="4.500" ry="1.400" fill="#5e4440"/><ellipse cx="849" cy="469.500" rx="4.500" ry="1.400" fill="#5e4440"/>
<ellipse cx="840" cy="491" rx="5.500" ry="1.600" fill="#a8605e"/>
<path d="M839,473 l-2.500,10 h6" fill="none" stroke="#a88274" stroke-width="1.100"/>
</g></svg><div class="mic" style="left:94.1px;top:11.4px;width:21.400px;height:21.400px;background:rgba(120,130,120,.75)"></div><svg class="abs" style="left:97.05px;top:14.85px" width="15.5" height="15.5" viewBox="0 0 24 24"><path d="M19 11h-1.700c0 .74-.16 1.430-.43 2.050l1.230 1.230c.56-.98.9-2.090.9-3.280zm-4.020.17c0-.06.020-.11.020-.17V5c0-1.660-1.340-3-3-3S9 3.340 9 5v.18l5.980 5.990zM4.270 3L3 4.270l6.010 6.010V11c0 1.660 1.330 3 2.990 3 .22 0 .44-.03.65-.08l1.660 1.660c-.71.33-1.500.52-2.310.52-2.760 0-5.300-2.100-5.300-5.100H5c0 3.410 2.720 6.230 6 6.720V21h2v-3.280c.91-.13 1.770-.45 2.540-.9L19.730 21 21 19.730 4.270 3z" fill="#fff" /></svg><div class="t" style="left:14.1px;top:78.7px;font-size:13px;line-height:18px;color:#fff;font-weight:bold;transform:scaleX(0.935);">Ірина Кравець</div>
</div>
<div class="btn red" style="left:326.6px;top:561.6px;width:35.5px;height:35.500px;border-radius:17.750px"></div>
<div class="btn red" style="left:372.6px;top:561.6px;width:35.5px;height:35.500px;border-radius:17.750px"></div>
<div class="btn" style="left:418.6px;top:561.6px;width:35.5px;height:35.500px;border-radius:17.750px"></div>
<div class="btn" style="left:464.4px;top:561.6px;width:35.5px;height:35.500px;border-radius:17.750px"></div>
<div class="btn" style="left:510.0px;top:561.6px;width:35.5px;height:35.500px;border-radius:17.750px"></div>
<div class="btn" style="left:555.6px;top:561.6px;width:35.5px;height:35.500px;border-radius:17.750px"></div>
<div class="btn" style="left:601.6px;top:561.6px;width:35.5px;height:35.500px;border-radius:17.750px"></div>
<div class="btn red" style="left:647.5px;top:561.6px;width:49.5px;height:35.500px;border-radius:17.750px"></div>
<svg class="abs" style="left:335.25px;top:569.65px" width="19.5" height="19.5" viewBox="0 0 24 24"><path d="M19 11h-1.700c0 .74-.16 1.430-.43 2.050l1.230 1.230c.56-.98.9-2.090.9-3.280zm-4.020.17c0-.06.020-.11.020-.17V5c0-1.660-1.340-3-3-3S9 3.340 9 5v.18l5.980 5.990zM4.270 3L3 4.270l6.010 6.010V11c0 1.660 1.330 3 2.990 3 .22 0 .44-.03.65-.08l1.660 1.660c-.71.33-1.500.52-2.310.52-2.760 0-5.300-2.100-5.300-5.100H5c0 3.410 2.720 6.230 6 6.720V21h2v-3.280c.91-.13 1.770-.45 2.540-.9L19.730 21 21 19.730 4.270 3z" fill="#fff" /></svg>
<svg class="abs" style="left:380px;top:569px" width="22" height="22" viewBox="380 569 22 22"><path d="M385.500,574.800 H394 V585 H384 V576.500" fill="none" stroke="#fff" stroke-width="1.700"/><path d="M394,579.800 l4.800,-4 v8.400 l-4.800,-4z" fill="#fff"/><path d="M383,573 L397.500,587.300" stroke="#fff" stroke-width="1.600"/><path d="M384.200,572 L398.700,586.300" stroke="#ee4436" stroke-width="1.300"/></svg>
<svg class="abs" style="left:424.95px;top:567.85px" width="22.5" height="22.5" viewBox="0 0 24 24"><path d="M19 4H5c-1.110 0-2 .9-2 2v12c0 1.100.89 2 2 2h14c1.100 0 2-.9 2-2V6c0-1.100-.9-2-2-2zm0 14H5V6h14v12zM7 15h3c.55 0 1-.45 1-1v-1H9.500v.5h-2v-3h2v.5H11v-1c0-.55-.45-1-1-1H7c-.55 0-1 .45-1 1v4c0 .55.45 1 1 1zm7 0h3c.55 0 1-.45 1-1v-1h-1.500v.5h-2v-3h2v.5H18v-1c0-.55-.45-1-1-1h-3c-.55 0-1 .45-1 1v4c0 .55.45 1 1 1z" fill="#fff" /></svg>
<svg class="abs" style="left:471.05px;top:568.25px" width="22.3" height="22.3" viewBox="0 0 24 24"><path d="M11.990 2C6.470 2 2 6.480 2 12s4.470 10 9.990 10C17.520 22 22 17.520 22 12S17.520 2 11.990 2zM12 20c-4.420 0-8-3.580-8-8s3.580-8 8-8 8 3.580 8 8-3.580 8-8 8zm3.500-9c.83 0 1.500-.67 1.500-1.500S16.330 8 15.500 8 14 8.670 14 9.500s.67 1.500 1.500 1.500zm-7 0c.83 0 1.500-.67 1.500-1.500S9.330 8 8.500 8 7 8.670 7 9.500 7.670 11 8.500 11zm3.500 6.500c2.330 0 4.310-1.460 5.110-3.500H6.890c.8 2.040 2.780 3.500 5.110 3.500z" fill="#fff" /></svg>
<svg class="abs" style="left:516.95px;top:568.35px" width="21.7" height="21.7" viewBox="0 0 24 24"><path d="M21 3H3c-1.110 0-2 .89-2 2v14c0 1.110.89 2 2 2h18c1.110 0 2-.89 2-2V5c0-1.110-.89-2-2-2zm0 16.020H3V4.980h18v14.040zM10 12H8l4-4 4 4h-2v4h-4v-4z" fill="#fff" /></svg>
<svg class="abs" style="left:561.1px;top:566.9px" width="25" height="25" viewBox="0 0 24 24"><path d="M8.200,13 V4.800 a1.300,1.300 0 0 1 2.600,0 V11 M10.800,11 V3.300 a1.300,1.300 0 0 1 2.600,0 V11 M13.400,11 V4 a1.300,1.300 0 0 1 2.600,0 V11.500 M16,11.500 V6.800 a1.300,1.300 0 0 1 2.600,0 V15 c0,4 -2.500,6.600 -6.300,6.600 c-3,0 -4.800,-1.500 -6.200,-4 L3.300,13.200 c-.5,-.9 .7,-1.900 1.700,-1.100 L8.200,15.200 V12.500" fill="none" stroke="#fff" stroke-width="1.600" stroke-linejoin="round"/></svg>
<div class="abs" style="left:617.2px;top:572.0px;width:4.400px;height:4.400px;border-radius:50%;background:#fff"></div>
<div class="abs" style="left:617.2px;top:577.2px;width:4.400px;height:4.400px;border-radius:50%;background:#fff"></div>
<div class="abs" style="left:617.2px;top:582.4px;width:4.400px;height:4.400px;border-radius:50%;background:#fff"></div>
<svg class="abs" style="left:661.05px;top:568.75px" width="22.3" height="22.3" viewBox="0 0 24 24"><path d="M12 9c-1.600 0-3.150.25-4.600.72v3.100c0 .39-.23.74-.56.9-.98.49-1.870 1.120-2.660 1.850-.18.18-.43.28-.7.28-.28 0-.53-.11-.71-.29L.29 13.080c-.18-.17-.29-.42-.29-.7 0-.28.110-.53.290-.71C3.340 8.780 7.460 7 12 7s8.660 1.780 11.710 4.670c.18.180.29.430.29.710 0 .28-.110.530-.290.710l-2.480 2.480c-.18.180-.43.290-.71.290-.27 0-.52-.110-.7-.280-.79-.740-1.690-1.360-2.670-1.850-.33-.16-.56-.5-.56-.9v-3.100C15.150 9.250 13.600 9 12 9z" fill="#fff" /></svg>
<div class="t" style="left:-3.0px;top:568.0px;font-size:16px;line-height:21px;color:#fff;font-weight:bold;">q</div>


</body>
</html>
